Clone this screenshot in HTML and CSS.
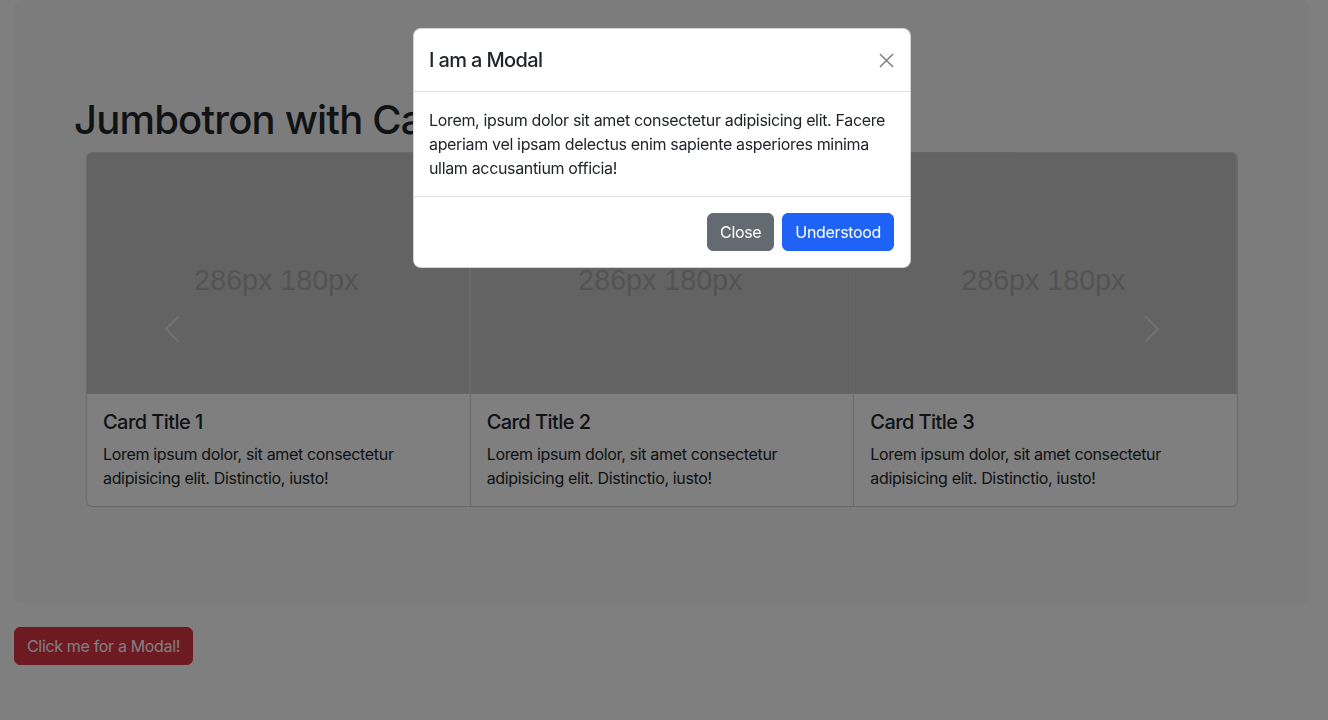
FILE: index.html
```html
<!DOCTYPE html>
<html lang="en">
<head>
<meta charset="utf-8">
<title>Jumbotron with Cards</title>
<link rel="stylesheet" href="styles.css">
</head>
<body>
  <div class="jumbotron">
    <div class="container-fluid">
      <h1 class="display-title">Jumbotron with Cards</h1>
      <div class="carousel">
        <div class="card-group">
          <div class="card">
            <svg class="card-img" viewBox="0 0 286 180" preserveAspectRatio="none">
              <rect width="286" height="180" class="ph-bg"/>
              <text x="141.5" y="102.5" text-anchor="middle" class="ph-text">286px 180px</text>
            </svg>
            <div class="card-body">
              <h5 class="card-title">Card Title 1</h5>
              <p class="card-text">Lorem ipsum dolor, sit amet consectetur adipisicing elit. Distinctio, iusto!</p>
            </div>
          </div>
          <div class="card">
            <svg class="card-img" viewBox="0 0 286 180" preserveAspectRatio="none">
              <rect width="286" height="180" class="ph-bg"/>
              <text x="141.5" y="102.5" text-anchor="middle" class="ph-text">286px 180px</text>
            </svg>
            <div class="card-body">
              <h5 class="card-title">Card Title 2</h5>
              <p class="card-text">Lorem ipsum dolor, sit amet consectetur adipisicing elit. Distinctio, iusto!</p>
            </div>
          </div>
          <div class="card">
            <svg class="card-img" viewBox="0 0 286 180" preserveAspectRatio="none">
              <rect width="286" height="180" class="ph-bg"/>
              <text x="141.5" y="102.5" text-anchor="middle" class="ph-text">286px 180px</text>
            </svg>
            <div class="card-body">
              <h5 class="card-title">Card Title 3</h5>
              <p class="card-text">Lorem ipsum dolor, sit amet consectetur adipisicing elit. Distinctio, iusto!</p>
            </div>
          </div>
        </div>
        <button class="carousel-control prev" type="button" aria-label="Previous">
          <svg class="control-icon" viewBox="0 0 16 16"><path d="M11.354 1.646a.5.5 0 0 1 0 .708L5.707 8l5.647 5.646a.5.5 0 0 1-.708.708l-6-6a.5.5 0 0 1 0-.708l6-6a.5.5 0 0 1 .708 0z"/></svg>
        </button>
        <button class="carousel-control next" type="button" aria-label="Next">
          <svg class="control-icon" viewBox="0 0 16 16"><path d="M4.646 1.646a.5.5 0 0 1 .708 0l6 6a.5.5 0 0 1 0 .708l-6 6a.5.5 0 0 1-.708-.708L10.293 8 4.646 2.354a.5.5 0 0 1 0-.708z"/></svg>
        </button>
      </div>
    </div>
  </div>

  <button class="btn btn-danger open-btn" type="button">Click me for a Modal!</button>

  <div class="modal-backdrop"></div>

  <div class="modal">
    <div class="modal-dialog">
      <div class="modal-content">
        <div class="modal-header">
          <h5 class="modal-title">I am a Modal</h5>
          <button class="btn-close" type="button" aria-label="Close">
            <svg viewBox="0 0 16 16" class="close-icon"><path d="M1 1 L15 15 M15 1 L1 15"/></svg>
          </button>
        </div>
        <div class="modal-body">
          Lorem, ipsum dolor sit amet consectetur adipisicing elit. Facere aperiam vel ipsam delectus enim sapiente asperiores minima ullam accusantium officia!
        </div>
        <div class="modal-footer">
          <button class="btn btn-secondary" type="button">Close</button>
          <button class="btn btn-primary" type="button">Understood</button>
        </div>
      </div>
    </div>
  </div>
</body>
</html>
```
FILE: styles.css
```css
* { box-sizing: border-box; }

html, body { height: 100%; }

body {
  margin: 0;
  padding-right: 4px;
  font-family: Inter, "Noto Sans", sans-serif;
  font-size: 16px;
  line-height: 1.5;
  letter-spacing: -0.021em;
  color: #212529;
  background: #fff;
  overflow: hidden;
}

.jumbotron {
  margin: 0 14px 24px 14px;
  padding: 48px;
  background: #f8f9fa;
  border-radius: 8px;
}

.container-fluid {
  padding: 48px 12px;
}

.display-title {
  margin: 0 0 8px 0;
  font-size: 40px;
  font-weight: 500;
  line-height: 1.2;
  letter-spacing: -0.02em;
}

.carousel {
  position: relative;
  margin: 0 12px;
}

.card-group {
  display: flex;
}

.card {
  flex: 1 1 0;
  min-width: 0;
  display: flex;
  flex-direction: column;
  background: #fff;
  border: 1px solid rgba(0, 0, 0, 0.175);
}

.card + .card { border-left: 0; }
.card:first-child { border-radius: 6px 0 0 6px; }
.card:last-child { border-radius: 0 6px 6px 0; }
.card:first-child .card-img { border-top-left-radius: 5px; }
.card:last-child .card-img { border-top-right-radius: 5px; }

.card-img {
  display: block;
  width: 100%;
  aspect-ratio: 286 / 180;
  height: auto;
}

.ph-bg { fill: #c7c7c7; }
.ph-text {
  fill: #a6a6a6;
  font-family: "Liberation Sans", Arial, sans-serif;
  font-size: 21.4px;
  letter-spacing: 0;
}

.card-body {
  padding: 16px;
}

.card-title {
  margin: 0 0 8px 0;
  font-size: 20px;
  font-weight: 500;
  line-height: 1.2;
  letter-spacing: -0.028em;
}

.card-text {
  margin: 0;
  font-size: 16px;
  line-height: 24px;
}

.carousel-control {
  position: absolute;
  top: 0;
  bottom: 0;
  width: 15%;
  display: flex;
  align-items: center;
  justify-content: center;
  padding: 0;
  border: 0;
  background: none;
  opacity: 0.5;
}

.carousel-control.prev { left: 0; }
.carousel-control.next { right: 0; }

.control-icon {
  width: 32px;
  height: 32px;
  fill: #fff;
}

.btn {
  display: inline-block;
  padding: 6px 12px;
  font-family: inherit;
  font-size: 16px;
  line-height: 24px;
  font-weight: 400;
  letter-spacing: -0.021em;
  border: 1px solid transparent;
  border-radius: 6px;
  color: #fff;
}

.open-btn {
  margin-left: 14px;
}

.btn-danger { background: #dc3545; border-color: #dc3545; }
.btn-secondary { background: #646a71; border-color: #646a71; }
.btn-primary { background: #1e63f6; border-color: #1e63f6; }

.modal-backdrop {
  position: fixed;
  inset: 0;
  background: #000;
  opacity: 0.5;
}

.modal {
  position: fixed;
  inset: 0;
  padding-right: 4px;
}

.modal-dialog {
  width: 498px;
  margin: 28px auto 0 auto;
}

.modal-content {
  background: #fff;
  border: 1px solid rgba(0, 0, 0, 0.175);
  border-radius: 8px;
}

.modal-header {
  display: flex;
  align-items: center;
  padding: 16px 16px 16px 15px;
  border-bottom: 1px solid #dee2e6;
}

.modal-title {
  margin: 0;
  font-size: 20px;
  font-weight: 500;
  line-height: 30px;
  letter-spacing: -0.032em;
}

.btn-close {
  margin: -8px -8px -8px auto;
  padding: 8px;
  width: 32px;
  height: 32px;
  border: 0;
  background: none;
  opacity: 0.5;
  display: flex;
  align-items: center;
  justify-content: center;
}

.close-icon {
  width: 15px;
  height: 17px;
  stroke: #000;
  stroke-width: 1.6;
  fill: none;
}

.modal-body {
  padding: 16px 16px 16px 15px;
  line-height: 24px;
}

.modal-footer {
  display: flex;
  justify-content: flex-end;
  align-items: center;
  padding: 12px;
  border-top: 1px solid #dee2e6;
}

.modal-footer .btn {
  margin: 4px;
}
```
